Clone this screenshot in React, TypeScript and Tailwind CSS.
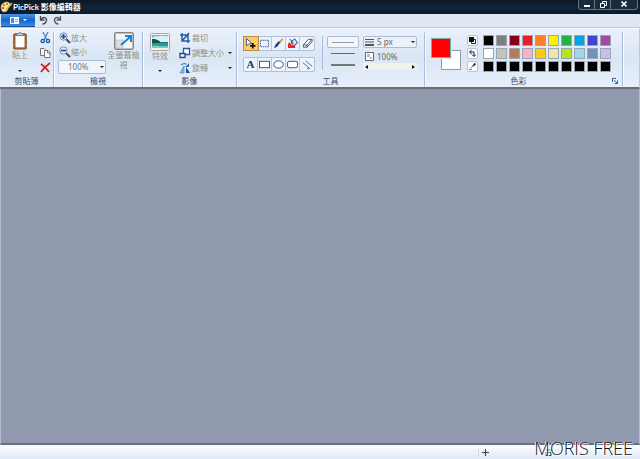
import { clsx } from 'clsx';
import type { ReactNode } from 'react';

const palette = [
  ['#000000', '#7f7f7f', '#880015', '#ed1c24', '#ff7f27', '#fff200', '#22b14c', '#00a2e8', '#3f48cc', '#a349a4'],
  ['#ffffff', '#c3c3c3', '#b97a57', '#ffaec9', '#ffc90e', '#efe4b0', '#b5e61d', '#99d9ea', '#7092be', '#c8bfe7'],
  ['#000000', '#000000', '#000000', '#000000', '#000000', '#000000', '#000000', '#000000', '#000000', '#000000'],
];

const tools: Array<Array<{ label: string; icon: ReactNode }>> = [
  [
    {
      label: 'Select',
      icon: (
        <>
          <path d="M1.500.5v8l2.500-2 3.500-.5z" fill="#fff" stroke="#2a4d96" />
          <path d="M8.500 5.500v6M5.500 8.500h6" stroke="#111" strokeWidth="2" />
        </>
      ),
    },
    { label: 'Region', icon: <rect x="1.5" y="2.5" width="9" height="7" fill="#eef5ff" stroke="#1f4f9c" strokeDasharray="1.5 .8" /> },
    {
      label: 'Brush',
      icon: (
        <>
          <path d="M10.500 1 7 5" stroke="#d99a2b" strokeWidth="2" />
          <path d="M8 4.500 5 9l-4 2.500 1.500-4L6 3.500z" fill="#223f83" />
        </>
      ),
    },
    {
      label: 'Fill',
      icon: (
        <>
          <path d="m4.500 4 4-3 3 4.500-5 3.500z" fill="#dbe8fa" stroke="#233d72" />
          <path d="M3 1 7 6" stroke="#233d72" />
          <path d="M1 7c1-3 3-3 3.500 1H9v3H1z" fill="#ed2523" />
        </>
      ),
    },
    {
      label: 'Eraser',
      icon: (
        <>
          <path d="m1.500 7.500 5.500-6h4l-5.500 6z" fill="#fff" stroke="#48536b" />
          <path d="M1.500 7.500v2.500h4l5.500-6V1.500M5.500 7.500V10" stroke="#48536b" />
        </>
      ),
    },
  ],
  [
    { label: 'Text', icon: <text x="6" y="10" textAnchor="middle" fontSize="12" fontWeight="700" fontFamily="Liberation Serif, serif" fill="#173468">A</text> },
    { label: 'Rectangle', icon: <rect x=".5" y="2.5" width="11" height="7" fill="#fff" stroke="#244b8f" /> },
    { label: 'Ellipse', icon: <ellipse cx="6" cy="6" rx="5.2" ry="4" fill="#fff" stroke="#244b8f" /> },
    { label: 'Rounded rectangle', icon: <rect x=".5" y="2.5" width="11" height="7" rx="2" fill="#fff" stroke="#244b8f" /> },
    { label: 'Line', icon: <path d="m1 4 7 6M4 2l7 6M8.500 10.500h-3" fill="none" stroke="#45649d" /> },
  ],
];

function Icon({ size = 'size-3', viewBox = '0 0 12 12', children }: { size?: string; viewBox?: string; children: ReactNode }) {
  return (
    <svg viewBox={viewBox} className={clsx('shrink-0', size)} fill="none" aria-hidden="true">
      {children}
    </svg>
  );
}

function Caret({ className }: { className?: string }) {
  return (
    <svg viewBox="0 0 4 2" className={clsx('h-[2px] w-1 shrink-0', className)} aria-hidden="true">
      <path d="M0 0h4L2 2z" fill="currentColor" />
    </svg>
  );
}

function Group({ label, width, launcher, children }: { label: string; width: string; launcher?: boolean; children: ReactNode }) {
  return (
    <section aria-label={label} className={clsx('flex shrink-0 flex-col pt-[3px]', width)}>
      <div className="flex min-h-0 flex-1 border-r border-[#a9bddb] shadow-[1px_0_0_#f7faff]">
        <div className="flex flex-1 flex-col">
          <div className="flex flex-1">{children}</div>
          <div className="flex h-3 items-center">
            <h2 className="flex-1 text-center text-[#3c4a6c]">{label}</h2>
            {launcher && (
              <button aria-label="More colors" className="mr-1">
                <Icon size="size-[6px]" viewBox="0 0 6 6">
                  <path d="M.5 4V.5H4M2 2l3 3M5.500 2.500v3h-3" stroke="#3e5f9a" />
                </Icon>
              </button>
            )}
          </div>
        </div>
      </div>
    </section>
  );
}

function TitleBar() {
  return (
    <header className="flex h-[14px] items-center bg-linear-to-b from-[#0a1725] via-[#10253a] to-[#0b1a2a]">
      <Icon size="h-3 w-[13px]" viewBox="0 0 13 12">
        <path d="M1 6c0-3 3-5 6-5 2 0 4 2 3 4-.5 1-2 1-2 2 0 2-1 4-4 4-2 0-3-2-3-5z" fill="#f6e6a0" stroke="#b58a2e" strokeWidth=".6" />
        <circle cx="4" cy="4" r="1.2" fill="#e8762c" />
        <circle cx="7" cy="3" r="1" fill="#4e9a3b" />
        <circle cx="3" cy="7" r="1.1" fill="#d83a2a" />
        <path d="m12 2-6 7" stroke="#e9b63c" strokeWidth="1.5" />
      </Icon>
      <h1 className="flex-1 font-['Lato','Noto_Sans_CJK_TC',sans-serif] text-[8px] font-bold text-white">PicPick 影像編輯器</h1>
      <div className="mr-[2px] flex h-[10px] self-start overflow-hidden rounded-b-sm border border-t-0 border-[#667583] bg-[#172b3c]">
        <button aria-label="Minimize" className="flex w-4 justify-center border-r border-[#667583]">
          <Icon size="size-2" viewBox="0 0 8 8"><path d="M1 6h6" stroke="#fff" strokeWidth="2" /></Icon>
        </button>
        <button aria-label="Restore" className="flex w-4 justify-center border-r border-[#667583]">
          <Icon size="size-2" viewBox="0 0 8 8"><path d="M1.500 3.500h4v4h-4zM3.500 3V1.500h4v4H6" stroke="#fff" /></Icon>
        </button>
        <button aria-label="Close" className="flex w-[26px] justify-center">
          <Icon size="size-2" viewBox="0 0 8 8"><path d="m1.500 1.500 5 5m0-5-5 5" stroke="#fff" strokeWidth="1.7" /></Icon>
        </button>
      </div>
    </header>
  );
}

function QuickBar() {
  return (
    <div className="flex h-[14px] items-start gap-1 border-b border-[#b9cae2] bg-[#dfe9f6]">
      <button aria-label="File" className="ml-px flex h-[13px] w-[34px] items-center justify-center gap-1 border-b border-[#1d4f9f] bg-linear-to-b from-[#4a97e8] via-[#1965c4] to-[#2d8df0] text-white">
        <Icon size="h-[7px] w-[9px]" viewBox="0 0 9 7">
          <rect width="9" height="7" rx=".5" fill="#fff" />
          <rect x="1" y="1" width="3" height="5" fill="#4a8bdc" />
          <path d="M5 2.500h3M5 4.500h3" stroke="#7ba7dd" />
        </Icon>
        <Caret />
      </button>
      <button aria-label="Undo" className="mt-px">
        <Icon size="h-[10px] w-[9px]" viewBox="0 0 9 10"><path d="M1.500 1v4h4M2 4.500C4 1.500 8 2 7.500 5.500 7 7.500 5 9 3.500 9" stroke="#4c4a4c" strokeWidth="1.3" /></Icon>
      </button>
      <button aria-label="Redo" className="mt-px ml-px">
        <Icon size="h-[10px] w-[9px]" viewBox="0 0 9 10"><path d="M7.500 1v4h-4M7 4.500C5 1.500 1 2 1.500 5.500 2 7.500 4 9 5.500 9" stroke="#5a5a5c" strokeWidth="1.3" /></Icon>
      </button>
    </div>
  );
}

function ClipboardGroup() {
  return (
    <Group label="剪貼簿" width="w-[54px]">
      <button className="flex w-10 flex-col items-center">
        <Icon size="h-[18px] w-4" viewBox="0 0 16 20">
          <rect x="1" y="2" width="14" height="17" rx="1" fill="#a5682e" stroke="#85501f" />
          <rect x="3" y="4" width="10" height="13" fill="#fff" />
          <path d="M4 4V2h2.500c0-2 3-2 3 0H12v2z" fill="#d3d7dc" stroke="#59616c" strokeWidth=".8" />
        </Icon>
        <span>貼上</span>
        <Caret className="mt-auto mb-[3px] text-[#222]" />
      </button>
      <div className="flex flex-col gap-[3px]">
        <button aria-label="Cut">
          <Icon>
            <path d="m3 0 4 8M8 0 4 8" stroke="#4c88c4" strokeWidth="1.3" />
            <circle cx="2.8" cy="9" r="1.6" stroke="#1757ad" strokeWidth="1.4" />
            <circle cx="8" cy="9" r="1.6" stroke="#1757ad" strokeWidth="1.4" />
          </Icon>
        </button>
        <button aria-label="Copy">
          <Icon>
            <path d="M.5 1.500H4L6 3.500v5H.5z" fill="#f3f3f3" stroke="#777" />
            <path d="M4.500 3.500H8l2 2v5H4.500z" fill="#fff" stroke="#777" />
            <path d="M7.500 3.500v2.500H10" stroke="#777" />
          </Icon>
        </button>
        <button aria-label="Delete">
          <Icon><path d="M1 2c3 2 6 5 8 8M10 1C6 4 3 7 1 10" stroke="#c9251f" strokeWidth="1.7" /></Icon>
        </button>
      </div>
    </Group>
  );
}

function ZoomIcon({ plus }: { plus?: boolean }) {
  return (
    <Icon>
      <path d="m7 7 4 4" stroke="#54473b" strokeWidth="2" />
      <circle cx="4.5" cy="4.5" r="3.7" fill="#e3efff" stroke="#7d8fa9" />
      <path d={plus ? 'M4.500 2v5M2 4.500h5' : 'M2 4.500h5'} stroke="#164fac" strokeWidth="1.7" />
    </Icon>
  );
}

function ViewGroup() {
  return (
    <Group label="檢視" width="w-[89px]">
      <div className="flex w-[52px] flex-col gap-[2px] pl-1">
        <button className="flex h-3 items-center pl-px"><ZoomIcon plus />放大</button>
        <button className="flex h-3 items-center pl-px"><ZoomIcon />縮小</button>
        <div className="relative">
          <select aria-label="Zoom" className="block h-[14px] w-12 appearance-none rounded-xs border border-[#acbcd3] bg-[#f1f5fb] pl-[9px] text-[#77756c]">
            <option>100%</option>
          </select>
          <Caret className="pointer-events-none absolute top-[6px] right-[2px] text-[#222]" />
        </div>
      </div>
      <button className="flex w-[35px] flex-col items-center">
        <Icon size="h-[18px] w-5" viewBox="0 0 20 18">
          <rect x=".5" y=".5" width="19" height="17" rx="1.5" fill="#bbb" stroke="#858585" />
          <path d="M2 2h16v14H2z" fill="#f5f5f5" />
          <path d="M2 8h7v8H2z" fill="#ddd" stroke="#b1b1b1" strokeWidth=".5" />
          <path d="m7 13 9-8M11 4h6v6" stroke="#1884d8" strokeWidth="2" />
        </Icon>
        <span>全螢幕檢<br />視</span>
      </button>
    </Group>
  );
}

function ImageGroup() {
  return (
    <Group label="影像" width="w-[94px]">
      <button className="flex w-[34px] flex-col items-center pt-px">
        <Icon size="h-[18px] w-5" viewBox="0 0 20 18">
          <rect x=".5" y=".5" width="19" height="17" rx="1" fill="#f4f3ed" stroke="#aaa69b" />
          <path d="M2 2h16v13H2z" fill="#62b9ef" />
          <path d="M2 5c4-3 6-1 8-2 3-1 5 1 8 0v6H2z" fill="#d5f0ff" />
          <path d="M2 6c5 0 8 2 9 4H2z" fill="#17533c" />
          <path d="M11 9h7v2h-7z" fill="#2b6f58" />
          <path d="M2 10h16v5H2z" fill="#249aa9" />
          <path d="M2 13c5-1 8 1 16 0v2H2z" fill="#7bd0b6" />
        </Icon>
        <span>特效</span>
        <Caret className="mt-auto mb-[3px] text-[#222]" />
      </button>
      <div className="flex flex-1 flex-col gap-[3px] pr-1 pl-[2px]">
        <button className="flex h-3 items-center gap-px">
          <Icon><path d="M3 1v8h8M1 3h8v8M3 9l7-8" stroke="#235da9" strokeWidth="1.5" /></Icon>
          裁切
        </button>
        <button className="flex h-3 items-center gap-px">
          <Icon><path d="M4.500 1.500h6v6h-6z" fill="#fff" stroke="#2b5797" strokeWidth="1.3" /><path d="M1 6.500h5v4H1z" fill="#e9f2ff" stroke="#1c4a8e" strokeWidth="1.3" /></Icon>
          <span className="flex-1 text-left">調整大小</span>
          <Caret className="text-[#222]" />
        </button>
        <button className="flex h-3 items-center gap-px">
          <Icon><path d="M5 4v7H1z" fill="#8db7e9" stroke="#4478bd" strokeWidth=".6" /><path d="M7 5v6h4z" fill="#174c97" /><path d="M2 3c3-2 5-2 7 1M9.500 1.500V4.500H6.500" stroke="#2562ac" /></Icon>
          <span className="flex-1 text-left">旋轉</span>
          <Caret className="text-[#222]" />
        </button>
      </div>
    </Group>
  );
}

function ToolsGroup() {
  return (
    <Group label="工具" width="w-[188px]">
      <div className="flex items-start pt-1 pl-[6px]">
        <div className="flex flex-col gap-[6px]">
          {tools.map((row, i) => (
            <div key={i} className="grid h-[15px] w-[72px] grid-cols-5 divide-x divide-[#b5c6de] rounded-xs border border-[#b0c1da] bg-[#edf3fb]">
              {row.map(({ label, icon }) => (
                <button
                  key={label}
                  aria-label={label}
                  className={clsx('flex items-center justify-center', label === 'Select' && 'bg-[#ffcb62] outline outline-[#b58b45]')}
                >
                  <Icon size="size-[11px]">{icon}</Icon>
                </button>
              ))}
            </div>
          ))}
        </div>
        <div className="ml-[7px] h-[34px] w-px bg-[#a9bddb]" />
        <div className="ml-1 flex w-8 flex-col">
          <button aria-label="Thin line" className="flex h-3 items-center rounded-xs border border-[#a9bddb] bg-[#f3f7fd] px-1">
            <span className="h-px flex-1 bg-[#999]" />
          </button>
          <button aria-label="Medium line" className="flex h-[11px] items-center px-1">
            <span className="h-px flex-1 bg-[#666]" />
          </button>
          <button aria-label="Thick line" className="flex h-[11px] items-center px-1">
            <span className="h-[2px] flex-1 bg-[#777]" />
          </button>
        </div>
        <div className="ml-1 flex w-[54px] flex-col">
          <div className="relative">
            <select aria-label="Line width" className="block h-3 w-full appearance-none rounded-xs border border-[#a9bddb] bg-[#eaf1fb] pl-[13px] text-[#686860]">
              <option>5 px</option>
            </select>
            <svg viewBox="0 0 9 8" className="pointer-events-none absolute top-[2px] left-[2px] h-2 w-[9px]" aria-hidden="true">
              <path d="M0 1.500h9M0 4h9" stroke="#555" />
              <path d="M0 7h9" stroke="#555" strokeWidth="2" />
            </svg>
            <Caret className="pointer-events-none absolute top-[5px] right-[2px] text-[#222]" />
          </div>
          <label htmlFor="opacity" className="mt-[3px] flex h-[11px] items-center gap-[3px] pl-[2px] text-[#686860]">
            <Icon size="size-[9px]" viewBox="0 0 9 9">
              <path d="M.5.5h8v8h-8z" fill="#fff" stroke="#666" />
              <path d="M2 2h3v3H2zM5 5h2v2H5z" fill="#bbb" />
            </Icon>
            100%
          </label>
          <div className="mt-px flex h-[7px] items-center bg-[#f0f0ee] px-[2px]">
            <Icon size="h-1 w-[3px]" viewBox="0 0 3 4"><path d="M3 0v4L0 2z" fill="#111" /></Icon>
            <input id="opacity" type="range" defaultValue={100} className="h-full min-w-0 flex-1 appearance-none bg-transparent [&::-webkit-slider-thumb]:appearance-none" />
            <Icon size="h-1 w-[3px]" viewBox="0 0 3 4"><path d="M0 0v4l3-2z" fill="#111" /></Icon>
          </div>
        </div>
      </div>
    </Group>
  );
}

function ColorGroup() {
  return (
    <Group label="色彩" width="w-[198px]" launcher>
      <div className="flex items-start pl-[6px]">
        <div className="relative mt-[6px] h-8 w-[30px]">
          <button aria-label="Background color" className="absolute right-0 bottom-0 size-5 border border-[#929dac] bg-white" />
          <button aria-label="Foreground color" className="absolute top-0 left-0 size-5 border border-[#83a9b5] bg-[#ff0000] outline outline-[#dceaf0]" />
        </div>
        <div className="mt-[3px] ml-[6px] flex w-[11px] flex-col gap-[2px]">
          <button aria-label="Default colors" className="flex size-[11px] items-center justify-center rounded-xs border border-[#b5c5da] bg-[#f8fafd]">
            <Icon size="size-[7px]" viewBox="0 0 7 7"><path d="M2.500 2.500h4v4h-4z" fill="#fff" stroke="#222" /><path d="M0 0h5v5H0z" fill="#111" /></Icon>
          </button>
          <button aria-label="Swap colors" className="flex size-[11px] items-center justify-center rounded-xs border border-[#b5c5da] bg-[#f8fafd]">
            <Icon size="size-[7px]" viewBox="0 0 7 7"><path d="M1 2h4v4M2.500 0 .5 2l2 2M3 4.500l2 2 2-2" stroke="#222" /></Icon>
          </button>
          <button aria-label="Pick color" className="flex size-[11px] items-center justify-center rounded-xs border border-[#b5c5da] bg-[#f8fafd]">
            <Icon size="size-[7px]" viewBox="0 0 7 7"><path d="m4 3 2.500-2.500" stroke="#222" strokeWidth="1.7" /><path d="m1.500 5.500 3-3" stroke="#777" /><path d="M0 6.500h3" stroke="#32c832" /></Icon>
          </button>
        </div>
        <div className="mt-[3px] ml-[5px] grid grid-cols-10 gap-[2px]">
          {palette.flat().map((color, i) => (
            <button key={i} aria-label={color} className="size-[11px] border border-[#9ba6b3]" style={{ backgroundColor: color }} />
          ))}
        </div>
      </div>
    </Group>
  );
}

function StatusBar() {
  return (
    <footer className="relative flex h-[14px] shrink-0 items-center border-t border-[#f8f8f8] bg-linear-to-b from-[#fafcff] to-[#dfe9f6]">
      <div className="flex-1" />
      <div className="flex w-[162px] items-center gap-14 border-l border-[#cad7e8] pl-[3px]">
        <Icon size="size-[7px]" viewBox="0 0 7 7"><path d="M3.500 0v7M0 3.500h7" stroke="#333" /><path d="M2 1.500h3M2 5.500h3M1.500 2v3M5.500 2v3" stroke="#aaa" strokeWidth=".5" /></Icon>
        <Icon size="size-[7px]" viewBox="0 0 7 7"><path d="M0 1h7M1 3.500h5v3H1z" stroke="#333" /></Icon>
      </div>
      <span className="absolute right-[7px] bottom-0 font-['Open_Sans'] text-[18px] leading-[22px] font-light text-[#15151c] [text-shadow:-1px_0_0_#fff,1px_1px_0_#fff]">
        MORIS FREE
      </span>
    </footer>
  );
}

export default function App() {
  return (
    <div className="flex h-screen flex-col bg-[#9199ae] font-['Noto_Sans','Noto_Sans_CJK_TC',sans-serif] text-[8px] leading-[10px] text-[#929184]">
      <TitleBar />
      <QuickBar />
      <div className="flex h-[61px] shrink-0 border-t border-r border-b-2 border-[#b9cae2] border-t-[#f8fbff] border-b-[#6c6e74] bg-linear-to-b from-[#eaf1fa] via-[#dae6f5] to-[#e6effa]">
        <ClipboardGroup />
        <ViewGroup />
        <ImageGroup />
        <ToolsGroup />
        <ColorGroup />
      </div>
      <main className="flex-1 border-x border-b-2 border-[#b4bccd] border-b-[#666f86] bg-[#9199ae]" />
      <StatusBar />
    </div>
  );
}
